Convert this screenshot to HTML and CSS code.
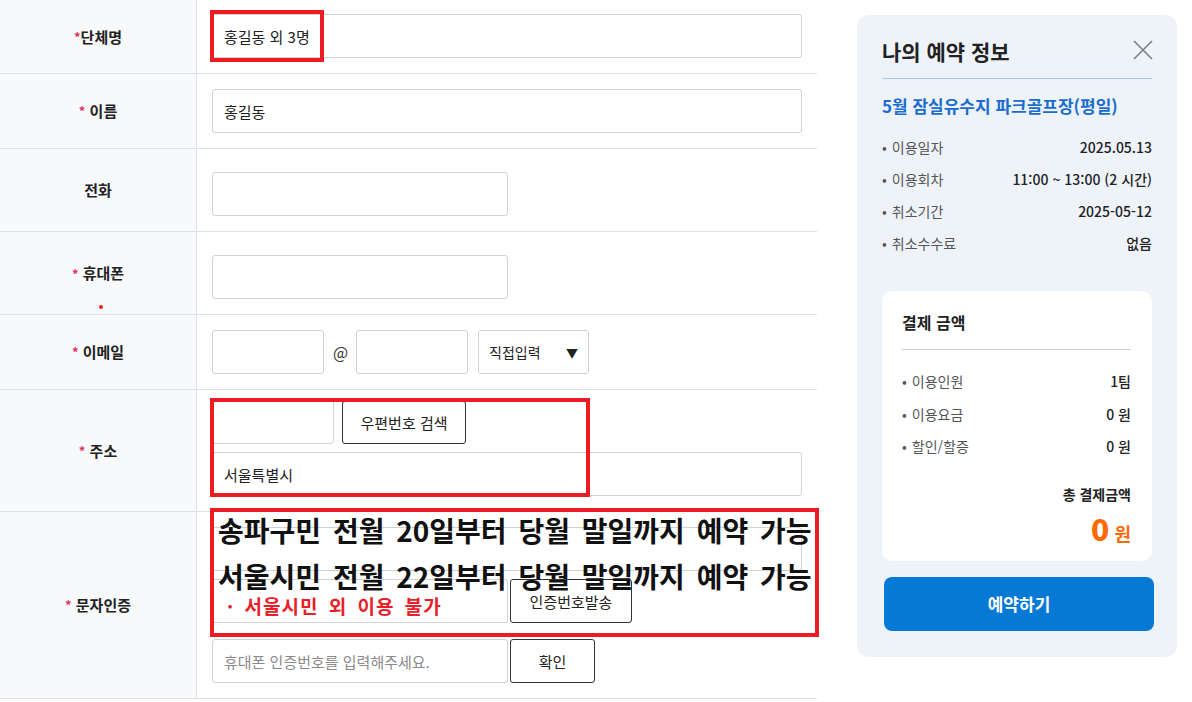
FILE: index.html
```html
<!DOCTYPE html>
<html lang="ko">
<head>
<meta charset="UTF-8">
<meta name="viewport" content="width=device-width, initial-scale=1.0">
<title>예약 정보 입력</title>
<link rel="stylesheet" href="styles.css">
</head>
<body>

<div class="page">
  <div class="form">
    <div class="row row-first">
      <div class="row-label"><span class="req">*</span>단체명</div>
      <div class="row-field">
        <input type="text" class="input input-full" value="홍길동 외 3명">
        <div class="mark mark-group"></div>
      </div>
    </div>

    <div class="row">
      <div class="row-label"><span class="req">*</span>&nbsp;이름</div>
      <div class="row-field">
        <input type="text" class="input input-full" value="홍길동">
      </div>
    </div>

    <div class="row row-tall">
      <div class="row-label">전화</div>
      <div class="row-field">
        <input type="text" class="input input-mid">
      </div>
    </div>

    <div class="row row-tall">
      <div class="row-label label-dot">
        <span><span class="req">*</span>&nbsp;휴대폰</span>
        <span class="dot"></span>
      </div>
      <div class="row-field">
        <input type="text" class="input input-mid">
      </div>
    </div>

    <div class="row">
      <div class="row-label"><span class="req">*</span>&nbsp;이메일</div>
      <div class="row-field field-inline">
        <input type="text" class="input input-email">
        <span class="at">@</span>
        <input type="text" class="input input-email">
        <div class="select-box">
          <span>직접입력</span>
          <span class="arrow">▼</span>
        </div>
      </div>
    </div>

    <div class="row row-address">
      <div class="row-label"><span class="req">*</span>&nbsp;주소</div>
      <div class="row-field">
        <div class="line">
          <input type="text" class="input input-zip">
          <button class="btn btn-zip">우편번호 검색</button>
        </div>
        <input type="text" class="input input-full addr" value="서울특별시">
        <div class="mark mark-address"></div>
      </div>
    </div>

    <div class="row row-sms">
      <div class="row-label"><span class="req">*</span>&nbsp;문자인증</div>
      <div class="row-field">
        <input type="text" class="input input-full">
        <div class="line line-send">
          <input type="text" class="input input-mid">
          <button class="btn btn-send">인증번호발송</button>
        </div>
        <div class="line line-confirm">
          <input type="text" class="input input-mid" placeholder="휴대폰 인증번호를 입력해주세요.">
          <button class="btn btn-ok">확인</button>
        </div>
        <div class="mark mark-notice">
          <p class="notice-big">송파구민 전월 20일부터 당월 말일까지 예약 가능</p>
          <p class="notice-big second">서울시민 전월 22일부터 당월 말일까지 예약 가능</p>
          <p class="notice-red">· 서울시민 외 이용 불가</p>
        </div>
      </div>
    </div>
  </div>

  <aside class="summary">
    <div class="summary-head">
      <h2>나의 예약 정보</h2>
      <svg class="close" width="20" height="20" viewBox="0 0 20 20">
        <path d="M1 1 L19 19 M19 1 L1 19" stroke="#7a7f87" stroke-width="1.6" fill="none"/>
      </svg>
    </div>
    <h3 class="course">5월 잠실유수지 파크골프장(평일)</h3>
    <ul class="info">
      <li><span class="key">이용일자</span><span class="val">2025.05.13</span></li>
      <li><span class="key">이용회차</span><span class="val">11:00 ~ 13:00 (2 시간)</span></li>
      <li><span class="key">취소기간</span><span class="val">2025-05-12</span></li>
      <li><span class="key">취소수수료</span><span class="val">없음</span></li>
    </ul>

    <div class="pay">
      <h4>결제 금액</h4>
      <ul class="info pay-list">
        <li><span class="key">이용인원</span><span class="val">1팀</span></li>
        <li><span class="key">이용요금</span><span class="val">0 원</span></li>
        <li><span class="key">할인/할증</span><span class="val">0 원</span></li>
      </ul>
      <div class="total-label">총 결제금액</div>
      <div class="total"><strong>0</strong> 원</div>
    </div>

    <button class="btn-reserve">예약하기</button>
  </aside>
</div>

</body>
</html>
```

FILE: styles.css
```css
/* 예약 폼 */
* {
  box-sizing: border-box;
}

body {
  margin: 0;
  font-family: "Noto Sans CJK KR", "Noto Sans", sans-serif;
  color: #222;
  background: #fff;
}

.page {
  display: flex;
  align-items: flex-start;
  gap: 40px;
}

.form {
  width: 817px;
  flex-shrink: 0;
}

.row {
  display: flex;
  border-bottom: 1px solid #dde1e6;
}

.row-label {
  width: 197px;
  flex-shrink: 0;
  background: #f7f9fb;
  border-right: 1px solid #dde1e6;
  display: flex;
  align-items: center;
  justify-content: center;
  font-size: 15px;
  font-weight: 700;
  line-height: 22px;
}

.req {
  color: #e0335e;
  font-size: 13px;
}

.row-field {
  flex: 1;
  position: relative;
  padding: 15px 15px;
}

.row-first .row-field {
  padding-top: 14px;
}

.row-tall .row-field {
  padding-top: 23px;
}

.label-dot {
  flex-direction: column;
  justify-content: flex-start;
  padding-top: 30px;
}

.dot {
  width: 4px;
  height: 4px;
  margin: 20px 0 0 6px;
  border-radius: 50%;
  background: #e8202a;
}

.input {
  display: block;
  height: 44px;
  border: 1px solid #cdd2d8;
  border-radius: 3px;
  padding: 0 11px;
  font-family: inherit;
  font-size: 15px;
  color: #222;
  background: #fff;
}

.input::placeholder {
  color: #8a8a8a;
}

.input-full {
  width: 590px;
}

.input-mid {
  width: 296px;
}

.input-email {
  width: 112px;
}

.input-zip {
  width: 122px;
}

.field-inline {
  display: flex;
  align-items: center;
  gap: 10px;
}

.at {
  font-size: 16px;
  color: #333;
  width: 13px;
  margin-left: -1px;
}

.select-box {
  width: 111px;
  height: 44px;
  border: 1px solid #cdd2d8;
  border-radius: 3px;
  display: flex;
  align-items: center;
  justify-content: space-between;
  padding: 0 10px;
  font-size: 14px;
}

.arrow {
  font-size: 12px;
}

.line {
  display: flex;
  gap: 8px;
}

.row-address .row-field {
  padding-top: 10px;
}

.addr {
  margin-top: 8px;
}

.btn {
  height: 43px;
  border: 1px solid #333;
  border-radius: 3px;
  background: #fff;
  font-family: inherit;
  font-size: 15px;
  color: #222;
  padding: 0;
}

.btn-zip {
  width: 124px;
  margin-top: 1px;
}

.line-send {
  margin-top: 8px;
  gap: 2px;
}

.line-confirm {
  margin-top: 16px;
  gap: 2px;
}

.btn-send {
  width: 122px;
  height: 44px;
}

.btn-ok {
  width: 85px;
  height: 44px;
}

/* 빨간 표시 박스 */
.mark {
  position: absolute;
  border: 4px solid #ed1c24;
  left: 13px;
}

.mark-group {
  top: 10px;
  width: 114px;
  height: 52px;
}

.mark-address {
  top: 8px;
  width: 380px;
  height: 99px;
}

.mark-notice {
  top: -4px;
  width: 609px;
  height: 129px;
  padding: 0 0 0 4px;
}

.mark-notice p {
  margin: 0;
}

.notice-big {
  font-size: 28px;
  font-weight: 700;
  line-height: 36px;
  color: #111;
  word-spacing: 4px;
  white-space: nowrap;
}

.notice-big.second {
  margin-top: 10px;
}

.notice-red {
  margin-top: 9px;
  padding-left: 9px;
  font-size: 19px;
  font-weight: 700;
  line-height: 24px;
  color: #e8202a;
  word-spacing: 4px;
  letter-spacing: 1px;
}

/* 예약 정보 패널 */
.summary {
  width: 320px;
  flex-shrink: 0;
  margin-top: 15px;
  padding: 24px 25px 26px;
  background: #eef3fa;
  border-radius: 12px;
}

.summary-head {
  display: flex;
  align-items: center;
  justify-content: space-between;
  padding-bottom: 15px;
  border-bottom: 1px solid #a9c7ee;
}

.summary-head h2 {
  margin: 0;
  font-size: 21px;
  font-weight: 700;
  line-height: 24px;
  color: #222;
}

.close {
  margin-right: -1px;
  margin-top: -2px;
}

.course {
  margin: 15px 0 0;
  font-size: 17px;
  font-weight: 700;
  line-height: 24px;
  color: #1a6dcc;
}

.info {
  list-style: none;
  margin: 13px 0 0;
  padding: 0;
}

.info li {
  display: flex;
  justify-content: space-between;
  line-height: 32px;
  font-size: 14px;
}

.info .key {
  color: #555;
}

.info .key::before {
  content: "•";
  margin-right: 5px;
  color: #555;
}

.info .val {
  color: #222;
  font-weight: 500;
}

.pay {
  margin-top: 32px;
  background: #fff;
  border-radius: 10px;
  padding: 21px 21px 10px 20px;
}

.pay h4 {
  margin: 0;
  padding-bottom: 17px;
  border-bottom: 1px solid #ccc;
  font-size: 16px;
  font-weight: 700;
  line-height: 20px;
}

.pay-list {
  margin-top: 15px;
}

.pay-list li {
  line-height: 32.5px;
}

.total-label {
  margin-top: 21px;
  text-align: right;
  font-size: 14px;
  font-weight: 700;
  line-height: 20px;
}

.total {
  margin-top: 6px;
  text-align: right;
  line-height: 36px;
  font-size: 18px;
  font-weight: 700;
  color: #ff6a00;
}

.total strong {
  font-size: 30px;
}

.btn-reserve {
  display: block;
  width: 270px;
  height: 54px;
  margin: 16px 0 0 2px;
  border: 0;
  border-radius: 8px;
  background: #0679d4;
  color: #fff;
  font-family: inherit;
  font-size: 17px;
  font-weight: 700;
}
```
